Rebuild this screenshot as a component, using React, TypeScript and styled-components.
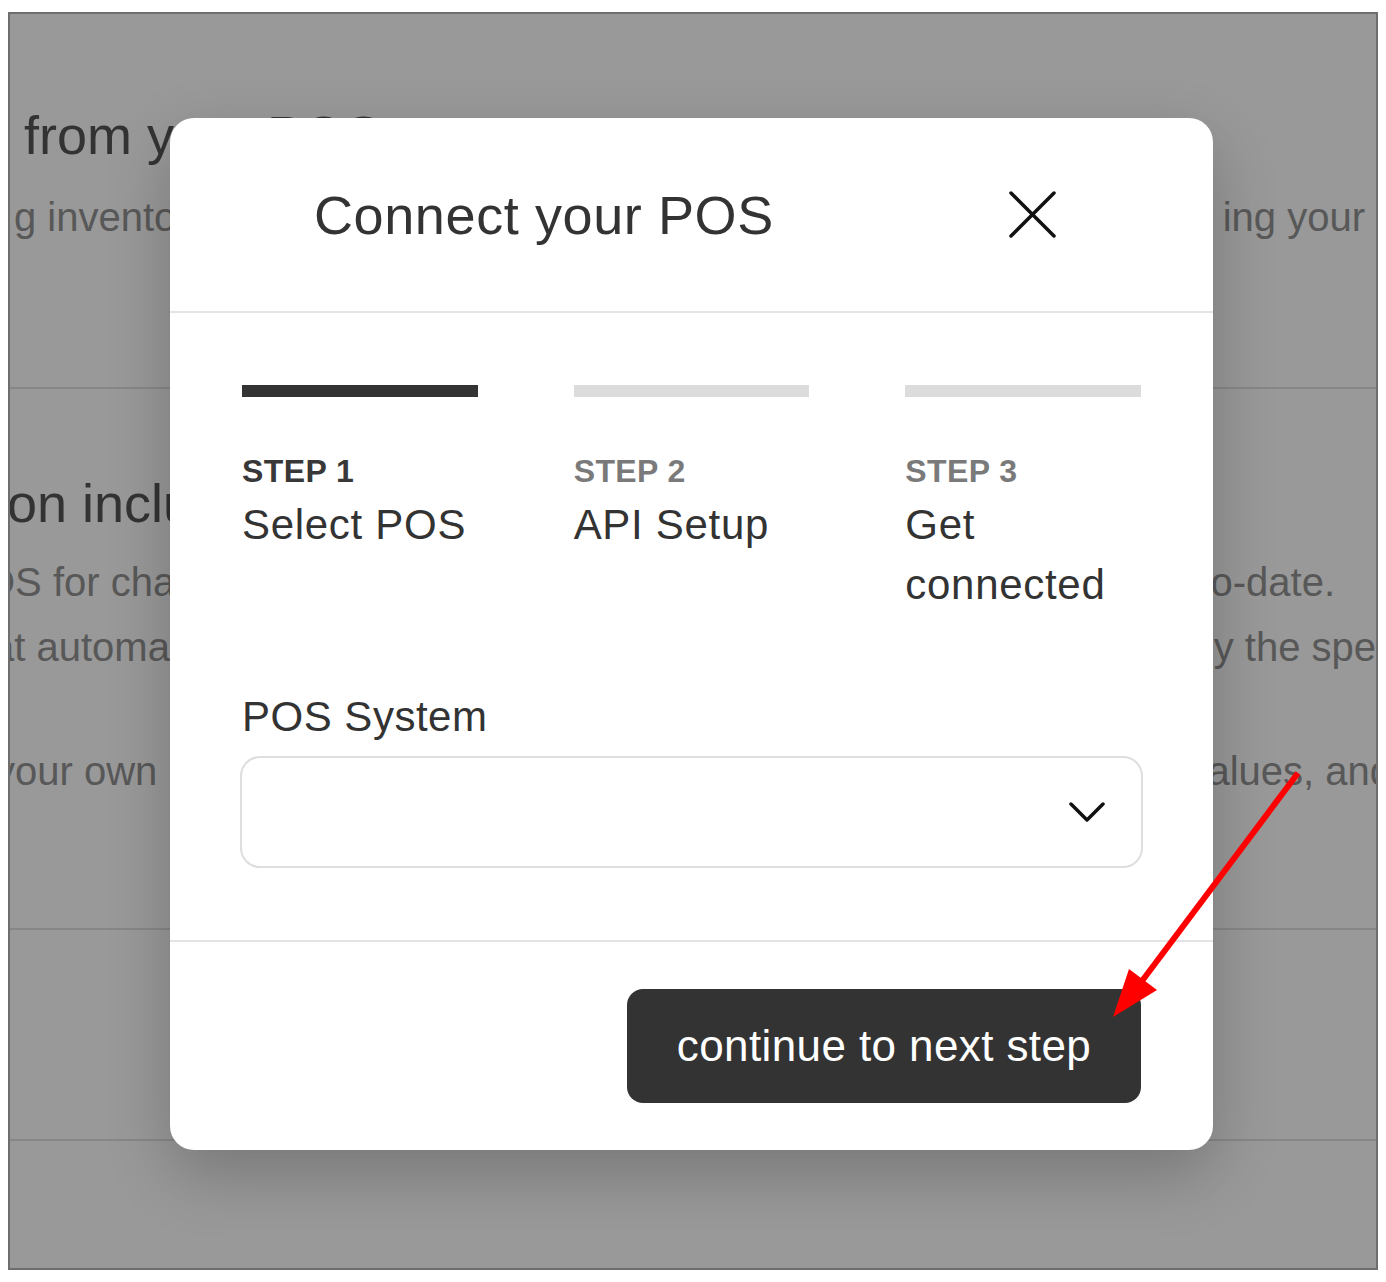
import React from "react"
import styled, { createGlobalStyle } from "styled-components"

const GlobalStyle = createGlobalStyle`
  html, body {
    margin: 0;
    padding: 0;
    background: #fff;
  }
  body {
    font-family: "Liberation Sans", Arial, sans-serif;
  }
  *, *::before, *::after {
    box-sizing: border-box;
  }
`

const Screen = styled.div`
  position: relative;
  width: 1386px;
  height: 1282px;
  padding: 12px 8px;
  background: #fff;
`

const Frame = styled.div`
  position: relative;
  height: 100%;
  border: 2px solid #6e6e6e;
  overflow: hidden;
  background: #fff;
`

/* page behind the dialog */

const Page = styled.div`
  font-family: "Liberation Sans", Arial, sans-serif;
`

const Section = styled.section<{ $top: number; $bottom: number }>`
  padding: ${props => props.$top}px 0 ${props => props.$bottom}px;
  border-bottom: 2px solid #e2e2e2;
`

const BgLine = styled.div<{ $size: number; $lh: number; $gap?: number }>`
  display: flex;
  justify-content: space-between;
  white-space: nowrap;
  font-size: ${props => props.$size}px;
  line-height: ${props => props.$lh}px;
  margin-top: ${props => props.$gap || 0}px;
`

const Heading = styled(BgLine)`
  color: #555;
  font-weight: 400;
`

const Para = styled(BgLine)`
  color: #939393;
`

const LeftFrag = styled.span<{ $shift: number }>`
  margin-left: ${props => props.$shift}px;
`

const RightFrag = styled.span<{ $shift: number }>`
  margin-right: ${props => props.$shift}px;
`

/* dialog */

const Overlay = styled.div`
  position: absolute;
  inset: 0;
  background: rgba(0, 0, 0, 0.4);
  display: flex;
  align-items: flex-start;
  padding: 104px 0 0 160px;
`

const Modal = styled.div`
  width: 1043px;
  background: #fff;
  border-radius: 24px;
  box-shadow: 0 24px 64px rgba(0, 0, 0, 0.22);
  color: #333;
  font-family: "Liberation Sans", Arial, sans-serif;
`

const Header = styled.header`
  height: 195px;
  display: flex;
  align-items: center;
  justify-content: space-between;
  padding: 0 157px 0 144px;
  border-bottom: 2px solid #e4e4e4;
`

const Title = styled.h2`
  margin: 0;
  font-size: 54px;
  font-weight: 400;
  line-height: 1;
  letter-spacing: 0.6px;
  color: #333;
`

const CloseButton = styled.button`
  width: 47px;
  height: 47px;
  padding: 0;
  border: 0;
  background: none;
  display: flex;
  cursor: pointer;
`

const Body = styled.div`
  padding: 72px;
`

const Steps = styled.ol`
  list-style: none;
  margin: 0;
  padding: 0;
  display: grid;
  grid-template-columns: repeat(3, 1fr);
  column-gap: 96px;
`

const StepBar = styled.div<{ $active: boolean }>`
  height: 12px;
  margin-bottom: 51px;
  background: ${props => (props.$active ? "#333" : "#dcdcdc")};
`

const StepLabel = styled.div<{ $active: boolean }>`
  font-size: 32px;
  font-weight: 700;
  line-height: 47px;
  letter-spacing: 0.4px;
  color: ${props => (props.$active ? "#383838" : "#7a7a7a")};
`

const StepTitle = styled.div`
  font-size: 42px;
  line-height: 60px;
  letter-spacing: 0.7px;
  color: #333;
`

const Field = styled.div`
  margin-top: 72px;
`

const Label = styled.label`
  display: block;
  font-size: 42px;
  line-height: 60px;
  letter-spacing: 0.5px;
  margin-bottom: 9px;
  color: #333;
`

const SelectBox = styled.div`
  height: 112px;
  margin: 0 -2px;
  border: 2px solid #dedede;
  border-radius: 20px;
  display: flex;
  align-items: center;
  justify-content: flex-end;
  padding-right: 36px;
`

const Footer = styled.footer`
  border-top: 2px solid #e4e4e4;
  padding: 47px 72px;
  display: flex;
  justify-content: flex-end;
`

const PrimaryButton = styled.button`
  width: 514px;
  height: 114px;
  border: 0;
  border-radius: 16px;
  background: #333;
  color: #fff;
  font-family: "Liberation Sans", Arial, sans-serif;
  font-size: 44px;
  letter-spacing: 0.4px;
  cursor: pointer;
`

const Annotation = styled.svg`
  position: absolute;
  top: 0;
  left: 0;
  pointer-events: none;
`

const steps = [
  { label: "STEP 1", title: "Select POS" },
  { label: "STEP 2", title: "API Setup" },
  { label: "STEP 3", title: "Get connected" },
]

const App = () => {
  const current = 0
  return (
    <Screen>
      <GlobalStyle />
      <Frame>
        <Page>
          <Section $top={91} $bottom={138}>
            <Heading $size={54} $lh={60}>
              <LeftFrag $shift={14}>from your POS</LeftFrag>
              <RightFrag $shift={0}></RightFrag>
            </Heading>
            <Para $size={40} $lh={64} $gap={20}>
              <LeftFrag $shift={4}>g inventory levels</LeftFrag>
              <RightFrag $shift={11}>ing your</RightFrag>
            </Para>
          </Section>
          <Section $top={84} $bottom={124}>
            <Heading $size={54} $lh={60}>
              <LeftFrag $shift={-3}>on included</LeftFrag>
              <RightFrag $shift={0}></RightFrag>
            </Heading>
            <Para $size={40} $lh={65} $gap={17}>
              <LeftFrag $shift={-26}>OS for changes</LeftFrag>
              <RightFrag $shift={41}>up-to-date.</RightFrag>
            </Para>
            <Para $size={40} $lh={65}>
              <LeftFrag $shift={-18}>at automatically</LeftFrag>
              <RightFrag $shift={0}>by the spe</RightFrag>
            </Para>
            <Para $size={40} $lh={65} $gap={59}>
              <LeftFrag $shift={-15}>your own prices</LeftFrag>
              <RightFrag $shift={-16}>values, and</RightFrag>
            </Para>
          </Section>
          <Section $top={209} $bottom={0} />
        </Page>

        <Overlay>
          <Modal role="dialog" aria-label="Connect your POS">
            <Header>
              <Title>Connect your POS</Title>
              <CloseButton aria-label="close">
                <svg width="47" height="47" viewBox="0 0 47 47">
                  <path
                    d="M2 2 45 45M45 2 2 45"
                    stroke="#111"
                    strokeWidth="3.5"
                    strokeLinecap="round"
                    fill="none"
                  />
                </svg>
              </CloseButton>
            </Header>

            <Body>
              <Steps>
                {steps.map((step, i) => (
                  <li key={step.label}>
                    <StepBar $active={i === current} />
                    <StepLabel $active={i === current}>{step.label}</StepLabel>
                    <StepTitle>{step.title}</StepTitle>
                  </li>
                ))}
              </Steps>

              <Field>
                <Label>POS System</Label>
                <SelectBox>
                  <svg width="36" height="22" viewBox="0 0 36 22">
                    <polyline
                      points="2,3 18,19 34,3"
                      stroke="#111"
                      strokeWidth="3.5"
                      strokeLinecap="round"
                      strokeLinejoin="round"
                      fill="none"
                    />
                  </svg>
                </SelectBox>
              </Field>
            </Body>

            <Footer>
              <PrimaryButton>continue to next step</PrimaryButton>
            </Footer>
          </Modal>
        </Overlay>
      </Frame>

      <Annotation width="1386" height="1282" viewBox="0 0 1386 1282">
        <line x1="1298" y1="773" x2="1142" y2="981" stroke="#ff0000" strokeWidth="6" />
        <polygon points="1113,1017 1129,969 1157,990" fill="#ff0000" />
      </Annotation>
    </Screen>
  )
}

export default App
